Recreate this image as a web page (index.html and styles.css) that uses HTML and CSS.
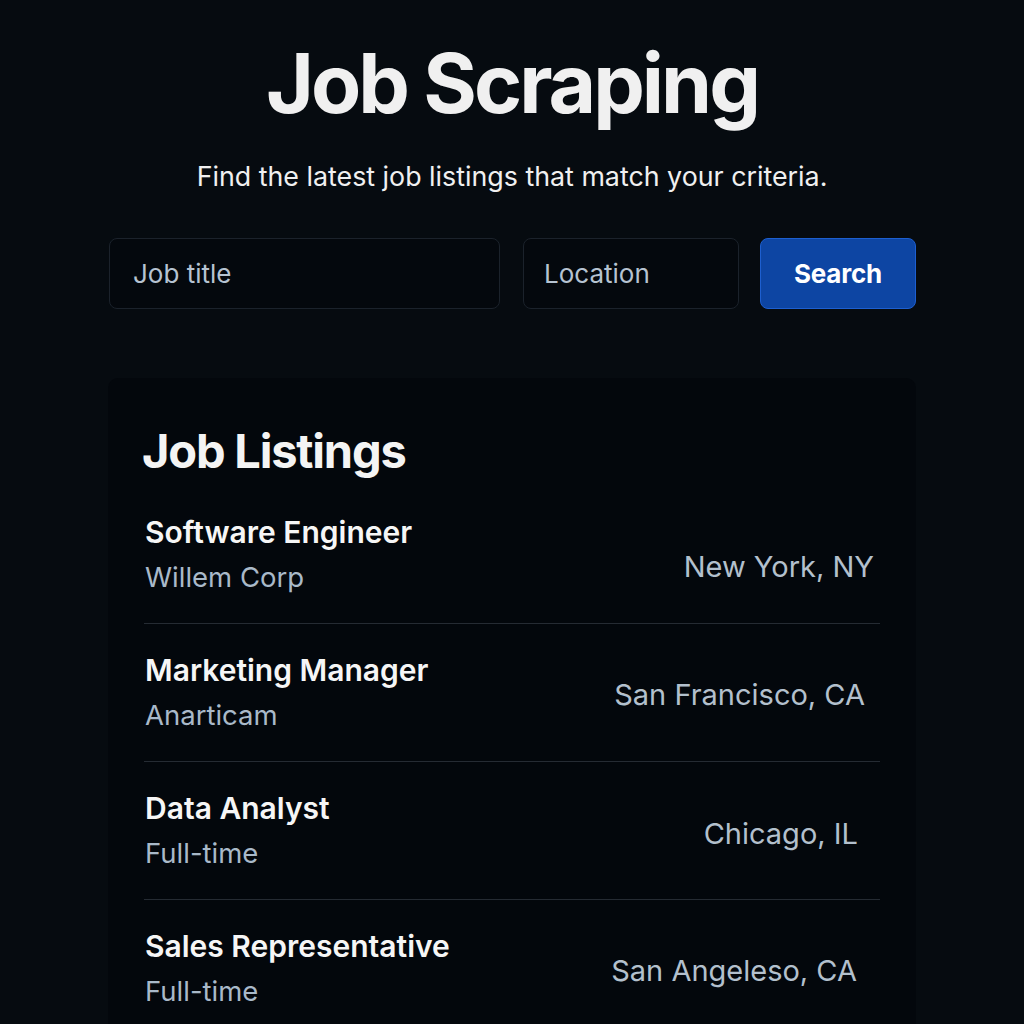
FILE: index.html
```html
<!DOCTYPE html>
<html lang="en">
<head>
<meta charset="utf-8">
<title>Job Scraping</title>
<link rel="stylesheet" href="styles.css">
</head>
<body>
<main class="page">
  <header class="hero">
    <h1 class="hero-title">Job Scraping</h1>
    <p class="hero-sub">Find the latest job listings that match your criteria.</p>
  </header>
  <form class="search">
    <input class="field field-title" type="text" placeholder="Job title">
    <input class="field field-loc" type="text" placeholder="Location">
    <button class="search-btn" type="button">Search</button>
  </form>
  <section class="card">
    <h2 class="card-title">Job Listings</h2>
    <ul class="jobs">
      <li class="job job-1">
        <div class="job-main">
          <div class="job-name">Software Engineer</div>
          <div class="job-meta">Willem Corp</div>
        </div>
        <div class="job-loc">New York, NY</div>
      </li>
      <li class="job job-2">
        <div class="job-main">
          <div class="job-name">Marketing Manager</div>
          <div class="job-meta">Anarticam</div>
        </div>
        <div class="job-loc">San Francisco, CA</div>
      </li>
      <li class="job job-3">
        <div class="job-main">
          <div class="job-name">Data Analyst</div>
          <div class="job-meta">Full-time</div>
        </div>
        <div class="job-loc">Chicago, IL</div>
      </li>
      <li class="job job-4">
        <div class="job-main">
          <div class="job-name">Sales Representative</div>
          <div class="job-meta">Full-time</div>
        </div>
        <div class="job-loc">San Angeleso, CA</div>
      </li>
    </ul>
  </section>
</main>
</body>
</html>
```

FILE: styles.css
```css
* { box-sizing: border-box; }
html, body {
  margin: 0;
  padding: 0;
  background: #060b10;
  height: 100%;
  overflow: hidden;
}
body {
  font-family: Inter, "Noto Sans", "Liberation Sans", sans-serif;
  color: #f2f2f2;
}
.page {
  width: 808px;
  margin: 0 auto;
  padding-top: 36px;
}
.hero {
  text-align: center;
}
.hero-title {
  margin: 0;
  font-size: 82px;
  font-weight: 700;
  letter-spacing: -3px;
  line-height: 96px;
  color: #f0f0f0;
}
.hero-sub {
  margin: 24px 0 0;
  font-size: 26.8px;
  font-weight: 400;
  line-height: 40px;
  color: #f0f0f0;
}
.search {
  display: flex;
  margin-top: 42px;
  padding-left: 1px;
}
.field {
  height: 71px;
  background: #04080d;
  border: 1px solid #1b222b;
  border-radius: 8px;
  padding: 0 23px;
  font-family: inherit;
  font-size: 26px;
  color: #c9d4e0;
  outline: none;
}
.field::placeholder { color: #b6c3d1; }
.field-title { width: 391px; }
.field-loc { width: 216px; margin-left: 23px; padding-left: 20px; }
.search-btn {
  width: 156px;
  height: 71px;
  margin-left: 21px;
  border: 1px solid #1d5fd0;
  border-radius: 8px;
  background: #0d45a3;
  color: #ffffff;
  font-family: inherit;
  font-size: 26px;
  font-weight: 700;
  letter-spacing: -0.2px;
}
.card {
  margin-top: 69px;
  background: #03070c;
  border-radius: 10px 10px 0 0;
  padding: 45px 36px 0 36px;
  height: 646px;
  overflow: hidden;
}
.card-title {
  margin: 0 0 0 -2px;
  font-size: 47px;
  font-weight: 700;
  letter-spacing: -1.2px;
  line-height: 56px;
  color: #f4f4f4;
}
.jobs {
  list-style: none;
  margin: 14px 0 0;
  padding: 0;
  width: 736px;
}
.job {
  display: flex;
  align-items: center;
  justify-content: space-between;
  height: 138px;
  border-bottom: 1px solid #252b33;
  padding: 0 0 0 1px;
}
.job-1 { height: 131px; padding-bottom: 8px; }
.job-main {
  display: flex;
  flex-direction: column;
  gap: 5px;
}
.job-name {
  font-size: 30px;
  font-weight: 600;
  letter-spacing: 0;
  line-height: 40px;
  color: #f6f6f6;
}
.job-meta {
  font-size: 27.5px;
  font-weight: 400;
  line-height: 40px;
  color: #a9b9c9;
}
.job-loc {
  font-size: 29px;
  font-weight: 400;
  line-height: 40px;
  color: #b3c0cd;
}
.job-1 .job-loc { margin-right: 6px; margin-top: 26px; }
.job-2 .job-loc { margin-right: 15px; margin-top: 4px; }
.job-3 .job-loc { margin-right: 22px; margin-top: 6px; }
.job-4 .job-loc { margin-right: 23px; margin-top: 4px; }
```
